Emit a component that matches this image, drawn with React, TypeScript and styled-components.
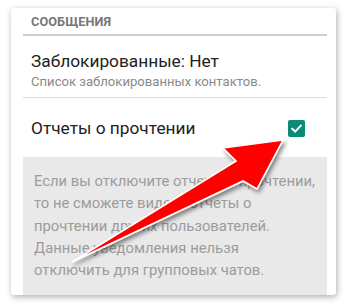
import React from "react";
import styled, { createGlobalStyle } from "styled-components";

const Global = createGlobalStyle`
  html, body { margin: 0; padding: 0; background: #ffffff; }
  body { font-family: Roboto, "Noto Sans", "Liberation Sans", sans-serif; }
`;

const Page = styled.div`
  position: relative;
  width: 348px;
  height: 306px;
  padding: 8px 12px 0 11px;
  box-sizing: border-box;
  overflow: hidden;
`;

const Card = styled.div`
  background: #ffffff;
  border-radius: 3px;
  box-shadow: 1px 2px 6px rgba(0, 0, 0, 0.32);
  height: 287px;
  display: flex;
  flex-direction: column;
  overflow: hidden;
`;

const SectionHeader = styled.div`
  padding: 6px 20px 5px;
  font-size: 12.7px;
  line-height: 15px;
  font-weight: 700;
  color: #777777;
  letter-spacing: 0.1px;
`;

const Divider = styled.div<{ $thick?: boolean }>`
  height: ${(p) => (p.$thick ? "2px" : "1px")};
  background: ${(p) => (p.$thick ? "#d0d0d0" : "#dcdcdc")};
  margin: 0 9px 0 12px;
`;

const Item = styled.div`
  padding: 15px 20px 7px;
  display: flex;
  flex-direction: column;
  gap: 3px;
`;

const Title = styled.div`
  font-size: 17.3px;
  line-height: 20px;
  color: #222222;
`;

const Subtitle = styled.div`
  font-size: 13.1px;
  line-height: 16px;
  color: #8a8a8a;
`;

const CheckRow = styled.div`
  display: flex;
  align-items: center;
  justify-content: space-between;
  padding: 20px 31px 19px 20px;
`;

const Checkbox = styled.div`
  width: 17px;
  height: 17px;
  border-radius: 2px;
  background: #0b8a77;
  display: flex;
  align-items: center;
  justify-content: center;
`;

const Note = styled.div`
  flex: 1;
  margin: 0 9px 0 12px;
  background: #e9e9e9;
  padding: 13px 8px 0 11px;
  font-size: 14.8px;
  line-height: 22.3px;
  color: #9c9c9c;
  white-space: nowrap;
`;

const ArrowLayer = styled.svg`
  position: absolute;
  left: 0;
  top: 0;
  pointer-events: none;
`;

export default function App() {
  return (
    <>
      <Global />
      <Page>
        <Card>
          <SectionHeader>СООБЩЕНИЯ</SectionHeader>
          <Divider $thick />
          <Item>
            <Title>Заблокированные: Нет</Title>
            <Subtitle>Список заблокированных контактов.</Subtitle>
          </Item>
          <Divider />
          <CheckRow>
            <Title>Отчеты о прочтении</Title>
            <Checkbox>
              <svg width="13" height="13" viewBox="0 0 13 13">
                <path
                  d="M2.2 6.8 L5.2 9.6 L10.8 3.6"
                  fill="none"
                  stroke="#ffffff"
                  strokeWidth="2"
                  strokeLinecap="square"
                />
              </svg>
            </Checkbox>
          </CheckRow>
          <Note>
            Если вы отключите отчеты о прочтении,
            <br />
            то не сможете видеть отчеты о
            <br />
            прочтении других пользователей.
            <br />
            Данные уведомления нельзя
            <br />
            отключить для групповых чатов.
          </Note>
        </Card>
        <ArrowLayer width="348" height="306" viewBox="0 0 348 306">
          <defs>
            <filter id="arrowShadow" x="-20%" y="-20%" width="140%" height="140%">
              <feDropShadow dx="2" dy="3" stdDeviation="2" floodColor="#000000" floodOpacity="0.45" />
            </filter>
          </defs>
          <polygon
            points="72,262 236,161 223,148 283,140 257,189 243,181"
            fill="#ff0000"
            stroke="#ffffff"
            strokeWidth="1.6"
            strokeLinejoin="miter"
            filter="url(#arrowShadow)"
          />
        </ArrowLayer>
      </Page>
    </>
  );
}
